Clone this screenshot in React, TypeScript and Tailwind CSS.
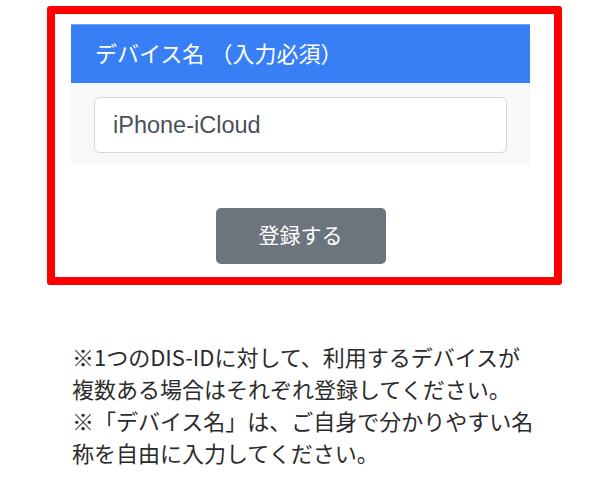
export default function App() {
  return (
    <div
      className="relative h-[483px] w-[600px] overflow-hidden bg-white"
      style={{ fontFamily: '"Liberation Sans", "Noto Sans CJK JP", sans-serif' }}
    >
      <div className="pl-[47px] pt-[6px]">
        <div className="h-[279px] w-[515px] rounded-[3px] border-8 border-[#ff0000] pl-[16px] pt-[10px]">
          <div className="w-[459px]">
            <div className="flex h-[59px] items-center border-t border-[#6ea3f8] bg-[#387ff6] pl-[24px] text-[22px] text-white">
              デバイス名 （入力必須）
            </div>
            <div className="h-[82px] bg-[#f7f8fa] pl-[23px] pt-[14px]">
              <input
                defaultValue="iPhone-iCloud"
                className="h-[56px] w-[413px] rounded-[6px] border border-[#d3d7dc] bg-white px-[18px] text-[23.5px] text-[#4a5057] outline-none"
              />
            </div>
            <div className="flex justify-center pt-[43px]">
              <button className="h-[56px] w-[170px] rounded-[5px] bg-[#6c747d] text-[21px] text-white">
                登録する
              </button>
            </div>
          </div>
        </div>
      </div>
      <div
        className="w-[540px] pl-[72px] pt-[55px] text-[22px] leading-[32px] text-[#2b2b2b]"
        style={{ fontFamily: '"Noto Sans CJK JP", sans-serif' }}
      >
        <p>※1つのDIS-IDに対して、利用するデバイスが複数ある場合はそれぞれ登録してください。</p>
        <p>※「デバイス名」は、ご自身で分かりやすい名称を自由に入力してください。</p>
      </div>
    </div>
  )
}
